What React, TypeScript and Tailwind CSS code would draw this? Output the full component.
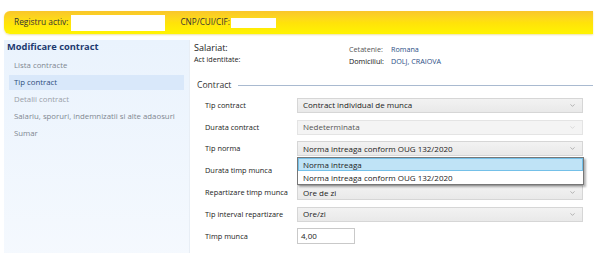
import { ChevronDown } from 'lucide-react';

const font = { fontFamily: '"Open Sans", "Noto Sans", sans-serif' };

function Select({ value, disabled }: { value: string; disabled?: boolean }) {
  return (
    <div
      className={`flex h-[15px] w-[286px] items-center justify-between border pl-[5px] pr-[6px] text-[8px] ${
        disabled
          ? 'border-[#e4e4e4] bg-[#f4f4f4] text-[#555]'
          : 'border-[#d6d6d6] bg-gradient-to-b from-[#f2f2f2] to-[#e9e9e9] text-[#222]'
      }`}
    >
      <span>{value}</span>
      <ChevronDown size={7} strokeWidth={2} className={disabled ? 'text-[#c8c8c8]' : 'text-[#888]'} />
    </div>
  );
}

function Row({ label, children }: { label: string; children: React.ReactNode }) {
  return (
    <div className="relative flex h-[15px] items-center">
      <div className="w-[103px] shrink-0 pl-[11px] text-[7.4px] text-[#222]">{label}</div>
      {children}
    </div>
  );
}

export default function App() {
  const menu = ['Lista contracte', 'Tip contract', 'Detalii contract', 'Salariu, sporuri, indemnizatii si alte adaosuri', 'Sumar'];

  return (
    <div className="h-[253px] w-[605px] overflow-hidden bg-white pl-[4px] pr-[12px] pt-[11px]" style={font}>
      {/* Yellow header bar */}
      <div className="flex h-[23px] items-center rounded-l-[6px] bg-gradient-to-b from-[#f9c62a] via-[#ffe20a] to-[#fff400] pl-[10px] shadow-[0_1px_2px_rgba(200,170,0,0.35)]">
        <span className="text-[8.4px] text-[#333]">Registru activ:</span>
        <div className="ml-[3px] h-[16px] w-[94px] bg-white" />
        <span className="ml-[15px] text-[8.2px] text-[#333]">CNP/CUI/CIF:</span>
        <div className="ml-[1px] h-[10px] w-[45px] bg-white" />
      </div>

      <div className="mt-[6px] flex h-[220px]">
        {/* Sidebar */}
        <div className="w-[186px] shrink-0 border-r border-[#e8eef5] bg-gradient-to-b from-[#eaf3fd] to-[#f5f9fe]">
          <div className="h-[14px] whitespace-nowrap pl-[3px] text-[9.3px] font-bold leading-[14px] text-[#1d3a70]">Modificare contract</div>
          <div className="mt-[4px] flex flex-col gap-[2px]">
            {menu.map((m, i) => (
              <div
                key={m}
                className={`mx-[5px] flex h-[15px] items-center whitespace-nowrap pl-[5px] text-[7.8px] ${
                  i === 1 ? 'bg-[#d9e8fa] text-[#2f4d7a]' : i === 2 ? 'text-[#9aa0a8]' : 'text-[#7f8790]'
                }`}
              >
                {m}
              </div>
            ))}
          </div>
        </div>

        {/* Main */}
        <div className="flex-1 pl-[4px]">
          <div className="flex">
            <div className="w-[155px] shrink-0">
              <div className="h-[14px] pt-[2px] text-[9px] leading-[12px] text-[#222]">Salariat:</div>
              <div className="text-[7.2px] leading-[10px] text-[#222]">Act identitate:</div>
            </div>
            <div className="pt-[3px]">
              <div className="flex h-[12px] items-center text-[7.2px]">
                <span className="w-[42px] shrink-0 text-[#555]">Cetatenie:</span>
                <span className="text-[#2c4f86]">Romana</span>
              </div>
              <div className="flex h-[12px] items-center text-[7.2px]">
                <span className="w-[42px] shrink-0 text-[#111]">Domiciliul:</span>
                <span className="text-[#2c4f86]">DOLJ, CRAIOVA</span>
              </div>
            </div>
          </div>

          <div className="mt-[12px] flex items-center">
            <span className="pl-[3px] text-[8.6px] text-[#333]">Contract</span>
            <div className="ml-[7px] h-px flex-1 bg-[#a9bad0]" />
          </div>

          <div className="mt-[6px] flex flex-col gap-[6.8px]">
            <Row label="Tip contract">
              <Select value="Contract individual de munca" />
            </Row>
            <Row label="Durata contract">
              <Select value="Nedeterminata" disabled />
            </Row>
            <Row label="Tip norma">
              <Select value="Norma intreaga conform OUG 132/2020" />
              {/* open dropdown */}
              <div className="absolute left-[103px] top-[16px] z-10 w-[287px] border border-[#777] bg-white text-[8px] text-[#222] shadow-[2px_2px_2px_rgba(0,0,0,0.3)]">
                <div className="flex h-[13px] items-center border border-[#74c0e8] bg-[#bfe3f6] pl-[4px]">Norma intreaga</div>
                <div className="flex h-[13px] items-center pl-[5px]">Norma intreaga conform OUG 132/2020</div>
              </div>
            </Row>
            <Row label="Durata timp munca">
              <Select value="" />
            </Row>
            <Row label="Repartizare timp munca">
              <Select value="Ore de zi" />
            </Row>
            <Row label="Tip interval repartizare">
              <Select value="Ore/zi" />
            </Row>
            <Row label="Timp munca">
              <div className="flex h-[16px] w-[58px] items-center border border-[#c9c9c9] bg-white pl-[3px] text-[8px] text-[#222]">4,00</div>
            </Row>
          </div>
        </div>
      </div>
    </div>
  );
}
